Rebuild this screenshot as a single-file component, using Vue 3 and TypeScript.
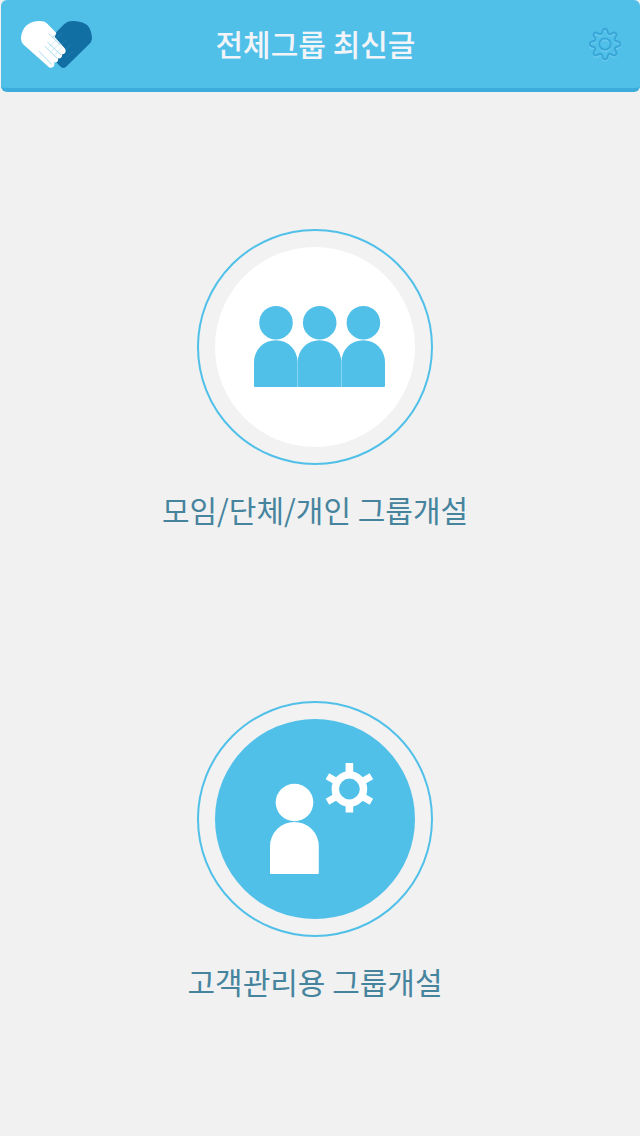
<script setup lang="ts">
const steps = 96

function cogOutline(cx: number, cy: number): string {
  const points: string[] = []
  for (let i = 0; i < steps; i++) {
    const angle = (i / steps) * Math.PI * 2
    const radius = 13 + (2.2 * Math.tanh(1.4 * Math.cos(8 * angle))) / Math.tanh(1.4)
    points.push(`${(cx + radius * Math.cos(angle)).toFixed(2)} ${(cy + radius * Math.sin(angle)).toFixed(2)}`)
  }
  return `M${points.join('L')}Z`
}

const cog = cogOutline(18, 18)
const memberOffsets = [0, 43.7, 87.4]
const toothAngles = [60, 120, 240, 300]
</script>

<template>
  <div class="page">
    <header class="bar">
      <a class="logo" href="#" aria-label="홈">
        <svg width="72" height="49" viewBox="30 30 216 147" aria-hidden="true">
          <path fill="#126fa3" d="M133 73L162 43C170 35 180 32 192 33C208 34 223 38 232 46C240 54 245 68 246 83C246 91 243 97 237 103L170 169C164 175 158 176 152 170L138 156L128 110Z" />
          <path d="M157 68L134 89M172 87L152 106M182 104L164 122M188 124L166 145" stroke="#2a82b3" stroke-width="2" fill="none" />
          <path fill="#fff" d="M33 83C34 68 40 55 50 46C60 37 74 33 90 33C99 33 106 35 112 41L139 69L134 81L164 115C171 124 165 134 156 133C158 142 151 147 144 145C146 154 140 159 132 157C137 166 127 178 117 172L41 104C35 98 33 91 33 83Z" />
          <g stroke="#78c7e5" stroke-width="2" fill="none">
            <path d="M117 71L153 107M112 96L153 135M104 108L142 146M87 124L125 163" />
            <path d="M139 90L115 113M149 99L124 125M157 110L133 136" opacity=".5" />
            <path d="M134 76L127 82" />
          </g>
        </svg>
      </a>
      <h1 class="title">전체그룹 최신글</h1>
      <button class="settings" type="button" aria-label="설정">
        <svg width="36" height="36" viewBox="0 0 36 36" fill="none" aria-hidden="true">
          <g stroke="#6bcaef" stroke-width="1.6" transform="translate(0 1.6)">
            <path :d="cog" />
            <circle cx="18" cy="18" r="5.6" />
          </g>
          <g stroke="#38a6d6" stroke-width="1.9">
            <path :d="cog" />
            <circle cx="18" cy="18" r="5.6" />
          </g>
        </svg>
      </button>
    </header>

    <main class="choices">
      <button class="choice" type="button">
        <svg class="emblem" viewBox="0 0 236 236" aria-hidden="true">
          <circle cx="118" cy="118" r="117" fill="#f2f2f2" stroke="#50c0e9" stroke-width="2" />
          <circle cx="118" cy="118" r="100" fill="#fff" />
          <g v-for="dx in memberOffsets" :key="dx" fill="#50c0e9" :transform="`translate(${dx} 0)`">
            <circle cx="79" cy="93.7" r="16.8" />
            <path d="M57 133A21.8 21.8 0 0 1 100.6 133V157Q100.6 158 99.6 158H58Q57 158 57 157Z" />
          </g>
          <path d="M100.7 134V158M144.4 134V158" stroke="#8bd4f0" stroke-width=".6" />
        </svg>
        <span class="label">모임/단체/개인 그룹개설</span>
      </button>

      <button class="choice" type="button">
        <svg class="emblem" viewBox="0 0 236 236" aria-hidden="true">
          <circle cx="118" cy="118" r="117" fill="#f2f2f2" stroke="#50c0e9" stroke-width="2" />
          <circle cx="118" cy="118" r="100" fill="#50c0e9" />
          <g fill="#fff">
            <circle cx="97.5" cy="101.5" r="18.8" />
            <path d="M73 145.3A24.4 24.4 0 0 1 121.8 145.3V172Q121.8 173 120.8 173H74Q73 173 73 172Z" />
            <path d="M148.6 62H156.2V74H148.6ZM148.6 102H156.2V111.6H148.6Z" />
            <rect
              v-for="angle in toothAngles"
              :key="angle"
              x="148.9"
              y="62.6"
              width="7"
              height="12"
              :transform="`rotate(${angle} 152.4 88)`"
            />
          </g>
          <circle cx="152.4" cy="88" r="14.1" fill="none" stroke="#fff" stroke-width="7.4" />
        </svg>
        <span class="label">고객관리용 그룹개설</span>
      </button>
    </main>
  </div>
</template>

<style>
body {
  margin: 0;
  background: #f1f1f1;
}
</style>

<style scoped>
.page {
  min-height: 100vh;
  background: #f1f1f1;
  font-family: "Noto Sans CJK KR", "Noto Sans", sans-serif;
}

.bar {
  display: grid;
  grid-template-columns: 72px 1fr 72px;
  align-items: center;
  box-sizing: border-box;
  height: 92px;
  margin-left: 1px;
  padding: 0 17px 0 19px;
  border-bottom: 4px solid #3bacdb;
  border-radius: 6px;
  background: #50c0e9;
}

.logo svg,
.settings svg {
  display: block;
}

.title {
  margin: 0;
  padding: 0 12px 2px 0;
  color: #f2f4f8;
  font-size: 30px;
  font-weight: 500;
  line-height: 44px;
  text-align: center;
}

.settings {
  justify-self: end;
  padding: 0;
  border: 0;
  background: none;
  cursor: pointer;
}

.choices {
  display: flex;
  flex-direction: column;
  align-items: center;
  gap: 170px;
  padding: 137px 10px 112px 0;
}

.choice {
  display: flex;
  flex-direction: column;
  align-items: center;
  gap: 22px;
  padding: 0;
  border: 0;
  background: none;
  font-family: inherit;
  cursor: pointer;
}

.emblem {
  display: block;
  width: 236px;
  height: 236px;
}

.label {
  color: #46849e;
  font-size: 30px;
  line-height: 44px;
}
</style>
